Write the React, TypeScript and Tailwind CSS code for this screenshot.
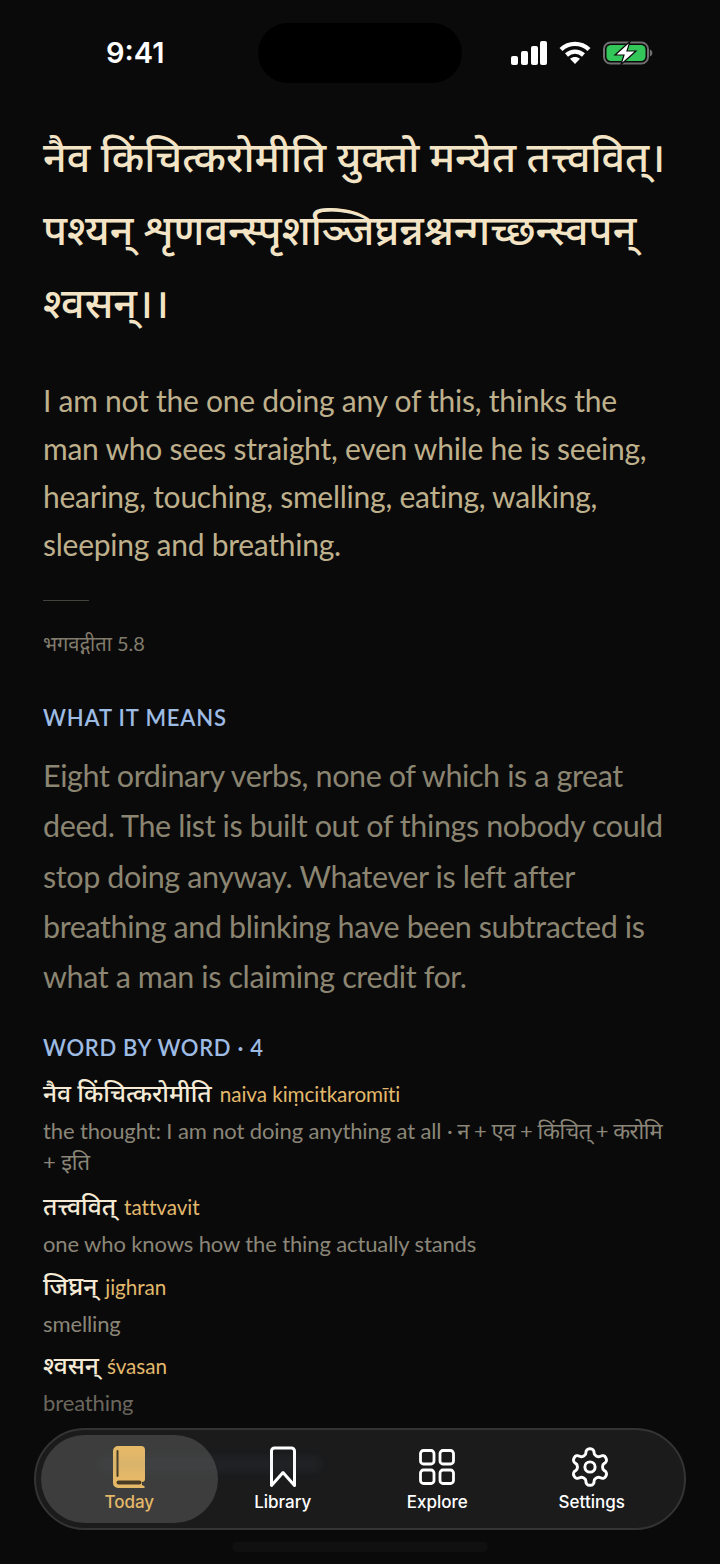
import React from "react";

const sans = "font-['Lato','Noto_Sans',sans-serif]";

function Word({ d, t, m, last, extra }: { d: string; t: string; m: React.ReactNode; last?: boolean; extra?: string }) {
  return (
    <div className={extra}>
      <div className="flex items-baseline gap-[8px] h-[32px] leading-[32px]">
        <span className="text-[24.6px] text-[#f5ead6] font-medium">{d}</span>
        <span className="text-[20.7px] tracking-[-0.05px] text-[#e3b96c]">{t}</span>
      </div>
      <div className={`text-[22px] tracking-[-0.12px] leading-[31px] mt-[6px] ${last ? "text-[#6b675e]" : "text-[#8b8678]"}`}>{m}</div>
    </div>
  );
}

const tabLabel = "text-[17px] leading-[22px] font-medium mt-[3px] font-['Inter',sans-serif]";

export default function App() {
  return (
    <div className={`relative w-[720px] h-[1564px] overflow-hidden bg-[#0a0a0b] ${sans}`}>
      <div className="flex items-center h-[108px] pl-[106px] pr-[67px]">
        <span className="text-[29px] font-semibold text-white font-['Inter',sans-serif] w-[152px] mt-[-2px]">9:41</span>
        <div className="w-[204px] h-[60px] rounded-[30px] bg-black mt-[-2px]" />
        <div className="ml-auto flex items-center gap-[12px] mt-[-2px]">
          <svg width="36" height="24" viewBox="0 0 36 24" fill="#fff">
            <rect x="0" y="15" width="7" height="9" rx="2" />
            <rect x="10" y="10" width="7" height="14" rx="2" />
            <rect x="20" y="5" width="7" height="19" rx="2" />
            <rect x="29" y="0" width="7" height="24" rx="2" />
          </svg>
          <svg width="32" height="24" viewBox="0 0 32 24" fill="none" stroke="#fff" strokeWidth="4.4">
            <path d="M2 8.5C10 1 22 1 30 8.5" />
            <path d="M7.5 14C12.5 9.5 19.5 9.5 24.5 14" />
            <path d="M16 23L11 17.8C14 15.4 18 15.4 21 17.8Z" fill="#fff" stroke="none" />
          </svg>
          <svg width="50" height="24" viewBox="0 0 50 24">
            <rect x="1" y="1.5" width="44" height="21" rx="6.5" fill="none" stroke="#6f6f6f" strokeWidth="2" />
            <rect x="3.5" y="4" width="39" height="16" rx="4.5" fill="#33c759" />
            <path d="M46.8 8.5c1.8.6 2.6 2 2.6 3.5s-.8 2.9-2.6 3.5z" fill="#6f6f6f" />
            <path d="M27 0.5L12 14H21L18 23.5L33 10H24Z" fill="#fff" stroke="#0a0a0b" strokeWidth="1.2" />
          </svg>
        </div>
      </div>

      <div className="px-[43px]">
        <div className="text-[41.3px] leading-[73px] font-medium text-[#f3e4c6] pt-[12px] whitespace-nowrap">
          <div>नैव किंचित्करोमीति युक्तो मन्येत तत्त्ववित्।</div>
          <div>पश्यन् शृणवन्स्पृशञ्जिघ्रन्नश्नन्गच्छन्स्वपन्</div>
          <div>श्वसन्।।</div>
        </div>

        <p className="mt-[37px] text-[30px] tracking-[-0.25px] leading-[48px] text-[#bfb08c]">
          I am not the one doing any of this, thinks the man who sees straight, even while he is seeing, hearing,
          touching, smelling, eating, walking, sleeping and breathing.
        </p>
        <div className="mt-[32px] w-[46px] h-px bg-[#45433d]" />
        <div className="mt-[28px] text-[20px] leading-[28px] text-[#827c6c]">भगवद्गीता 5.8</div>

        <div className="mt-[47px] text-[22px] leading-[28px] font-semibold tracking-[0.85px] text-[#9dbbe3]">WHAT IT MEANS</div>
        <p className="mt-[18px] text-[30.5px] tracking-[-0.4px] leading-[50.3px] text-[#8b8571]">
          Eight ordinary verbs, none of which is a great deed. The list is built out of things nobody could stop doing
          anyway. Whatever is left after breathing and blinking have been subtracted is what a man is claiming credit
          for.
        </p>

        <div className="mt-[33px] text-[22px] leading-[28px] font-semibold tracking-[0.7px] text-[#9dbbe3]">WORD BY WORD · 4</div>
        <div className="mt-[15px] flex flex-col gap-[10.5px]">
          <Word
            extra="mb-[2.5px]"
            d="नैव किंचित्करोमीति"
            t="naiva kiṃcitkaromīti"
            m={
              <>
                the thought: I am not doing anything at all <span className="tracking-[-0.5px]">· न + एव + किंचित् + करोमि</span> + इति
              </>
            }
          />
          <Word d="तत्त्ववित्" t="tattvavit" m="one who knows how the thing actually stands" />
          <Word d="जिघ्रन्" t="jighran" m="smelling" />
          <Word d="श्वसन्" t="śvasan" m="breathing" last />
        </div>
      </div>

      <div className="absolute left-0 right-0 top-[1412px] h-[152px] bg-gradient-to-b from-transparent to-[#0a0a0b] to-[15%]" />

      <div className="absolute left-[34px] top-[1428px] w-[652px] h-[102px] rounded-[51px] bg-[#1b1b1c] border-2 border-[#343434] grid grid-cols-4 items-center px-[15px]">
        <div className="-ml-[10px] -mr-[12px] h-[88px] rounded-[44px] bg-[#3d3d3d] flex flex-col items-center justify-center">
          <svg width="34" height="42" viewBox="-1 0 34 42">
            <path d="M5 0H28a4 4 0 0 1 4 4V33a3 3 0 0 1-3 3v2.5c0 .8 1 1.4 2.5 1.5v2H5a5 5 0 0 1-5-5V5a5 5 0 0 1 5-5Z" fill="#e5b968" />
            <rect x="3.5" y="4" width="2" height="27" rx="1" fill="#4a3c24" />
            <rect x="3.5" y="34.5" width="25" height="4" rx="2" fill="#4a3c24" />
          </svg>
          <span className={`${tabLabel} text-[#e5b968]`}>Today</span>
        </div>
        <div className="flex flex-col items-center justify-center">
          <svg width="28" height="42" viewBox="0 0 28 42" fill="none" stroke="#fff" strokeWidth="3" strokeLinejoin="round">
            <path d="M5.5 2H22.5a3 3 0 0 1 3 3V39.5L14 26.5L2.5 39.5V5a3 3 0 0 1 3-3Z" />
          </svg>
          <span className={`${tabLabel} text-white`}>Library</span>
        </div>
        <div className="flex flex-col items-center justify-center">
          <svg width="36" height="36" viewBox="0 0 36 36" fill="none" stroke="#fff" strokeWidth="2.8" className="my-[3px]">
            <rect x="1.5" y="1.5" width="13.5" height="13.5" rx="3" />
            <rect x="21" y="1.5" width="13.5" height="13.5" rx="3" />
            <rect x="1.5" y="21" width="13.5" height="13.5" rx="3" />
            <rect x="21" y="21" width="13.5" height="13.5" rx="3" />
          </svg>
          <span className={`${tabLabel} text-white`}>Explore</span>
        </div>
        <div className="flex flex-col items-center justify-center">
          <svg width="44" height="44" viewBox="0 0 24 24" fill="none" stroke="#fff" strokeWidth="1.6" strokeLinecap="round" strokeLinejoin="round" className="-my-[1px] -ml-[3px]">
            <path d="M12.22 2h-.44a2 2 0 0 0-2 2v.18a2 2 0 0 1-1 1.73l-.43.25a2 2 0 0 1-2 0l-.15-.08a2 2 0 0 0-2.73.73l-.22.38a2 2 0 0 0 .73 2.73l.15.1a2 2 0 0 1 1 1.72v.51a2 2 0 0 1-1 1.74l-.15.09a2 2 0 0 0-.73 2.73l.22.38a2 2 0 0 0 2.73.73l.15-.08a2 2 0 0 1 2 0l.43.25a2 2 0 0 1 1 1.73V20a2 2 0 0 0 2 2h.44a2 2 0 0 0 2-2v-.18a2 2 0 0 1 1-1.73l.43-.25a2 2 0 0 1 2 0l.15.08a2 2 0 0 0 2.73-.73l.22-.39a2 2 0 0 0-.73-2.73l-.15-.08a2 2 0 0 1-1-1.74v-.5a2 2 0 0 1 1-1.74l.15-.09a2 2 0 0 0 .73-2.73l-.22-.38a2 2 0 0 0-2.73-.73l-.15.08a2 2 0 0 1-2 0l-.43-.25a2 2 0 0 1-1-1.73V4a2 2 0 0 0-2-2z" />
            <circle cx="12" cy="12" r="2.8" />
          </svg>
          <span className={`${tabLabel} text-white`}>Settings</span>
        </div>
        <div className="absolute left-[64px] top-[27px] w-[220px] h-[14px] bg-[#5a7a8a]/[0.08] blur-[4px] pointer-events-none" />
      </div>
      <div className="absolute left-[232px] top-[1542px] w-[256px] h-[10px] rounded-full bg-[#101011]" />
    </div>
  );
}
